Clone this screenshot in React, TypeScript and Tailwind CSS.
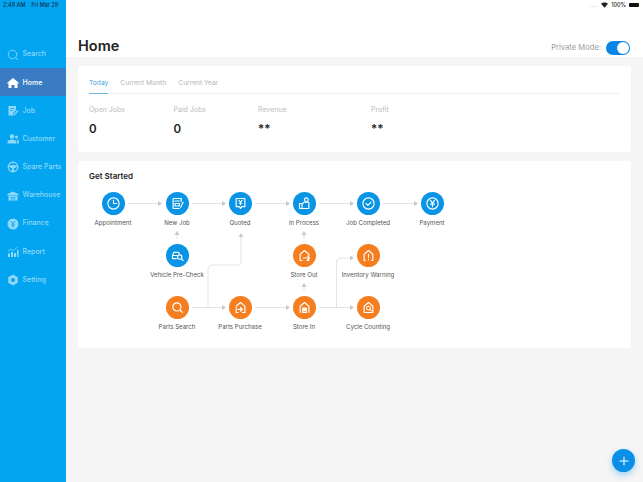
import type { ReactNode } from "react"
import { Plus } from "lucide-react"

const FONT = "font-['Inter','Liberation_Sans',sans-serif]"

const NavIcon = ({ children }: { children: ReactNode }) => (
  <svg viewBox="0 0 24 24" className="h-[12px] w-[12px]" fill="currentColor">
    {children}
  </svg>
)

const navItems = [
  { label: "Search", icon: <NavIcon><circle cx="11" cy="11" r="8.500" fill="none" stroke="currentColor" strokeWidth="1.800" /><path d="M17 17l5 5" stroke="currentColor" strokeWidth="1.800" strokeLinecap="round" /></NavIcon> },
  { label: "Home", active: true, icon: <NavIcon><path d="M12 2L0 12l1.500 1.500L3 12.300V22h6v-6h6v6h6v-9.700l1.500 1.200L24 12z" /></NavIcon> },
  { label: "Job", icon: <NavIcon><path d="M3 2h15v8l-6 7v4H3z" /><path d="M21 10l2 2-8 9h-2v-2z" /><path d="M6 7h9M6 11h6" stroke="#03a5f1" strokeWidth="1.500" /></NavIcon> },
  { label: "Customer", icon: <NavIcon><circle cx="10" cy="7" r="4.500" /><circle cx="19" cy="8" r="3" /><path d="M1 21v-3c0-3 4-5 9-5s9 2 9 5v3zM20.500 21v-4c0-1.500-.5-3-2-4 3 0 5.500 1.500 5.500 4v4z" /></NavIcon> },
  { label: "Spare Parts", icon: <NavIcon><circle cx="12" cy="12" r="9.500" fill="none" stroke="currentColor" strokeWidth="2.600" /><path d="M3 10c6-3 12-3 18 0l-5 4h-8zM10 14h4v7h-4z" /></NavIcon> },
  { label: "Warehouse", icon: <NavIcon><path d="M12 3L1 8v3h22V8z" /><path d="M3 12h18v9H3z" /><path d="M7 15h10M7 18h10" stroke="#03a5f1" strokeWidth="1.500" /></NavIcon> },
  { label: "Finance", icon: <NavIcon><circle cx="12" cy="12" r="11" /><path d="M8 6l4 6 4-6M12 12v7M8.500 14h7" stroke="#03a5f1" strokeWidth="1.800" fill="none" /></NavIcon> },
  { label: "Report", icon: <NavIcon><path d="M2 15h4v7H2zM8 12h4v10H8zM14 14h4v8h-4zM20 8h3v14h-3z" /><path d="M2 10l6-4 5 3 8-7" fill="none" stroke="currentColor" strokeWidth="1.500" /></NavIcon> },
  { label: "Setting", icon: <NavIcon><path d="M12 1l9.500 5.500v11L12 23l-9.500-5.500v-11z" /><circle cx="12" cy="12" r="4" fill="#03a5f1" /></NavIcon> },
]

const Sym = ({ children }: { children: ReactNode }) => (
  <svg viewBox="0 0 24 24" className="h-[15px] w-[15px]" fill="none" stroke="white" strokeWidth="1.800" strokeLinecap="round" strokeLinejoin="round">
    {children}
  </svg>
)

const nodes: { label: string; x: number; y: number; orange?: boolean; icon: ReactNode }[] = [
  { label: "Appointment", x: 35, y: 42, icon: <Sym><circle cx="12" cy="12" r="9" /><path d="M12 7v5h5" /></Sym> },
  { label: "New Job", x: 99, y: 42, icon: <Sym><path d="M18 9V4H5v16h10" /><path d="M8 8h7M8 12h7v4H8z" /><path d="M21 10l-4 8" /></Sym> },
  { label: "Quoted", x: 162, y: 42, icon: <Sym><path d="M5 4h14v13h-5l-2 3-2-3H5z" /><path d="M9.500 7l2.500 3 2.500-3M12 10v4M10 11.500h4" /></Sym> },
  { label: "In Process", x: 226, y: 42, icon: <Sym><circle cx="15" cy="6" r="3" /><path d="M4 12h4v8H4zM8 13l3-3h8v10H8" /></Sym> },
  { label: "Job Completed", x: 290, y: 42, icon: <Sym><circle cx="12" cy="12" r="9" /><path d="M8 12l3 3 5-5" /></Sym> },
  { label: "Payment", x: 354, y: 42, icon: <Sym><circle cx="12" cy="12" r="9" /><path d="M9 7l3 5 3-5M12 12v5M9 13h6" /></Sym> },
  { label: "Vehicle Pre-Check", x: 99, y: 94, icon: <Sym><path d="M10 17H4v-5l2-5h8l1 3M4 12h7" /><circle cx="15.500" cy="14.500" r="3.500" /><path d="M18 17l3 3" /></Sym> },
  { label: "Store Out", x: 226, y: 94, orange: true, icon: <Sym><path d="M8 20H5V10l7-6 7 6v2M19 19v1h-3" /><path d="M10 16h10M17 13l3 3-3 3" /></Sym> },
  { label: "Inventory Warning", x: 290, y: 94, orange: true, icon: <Sym><path d="M7 20H5V10l7-6 7 6v10h-2" /><path d="M12 10v5M12 18v.500" /></Sym> },
  { label: "Parts Search", x: 99, y: 146, orange: true, icon: <Sym><circle cx="11" cy="11" r="6.500" /><path d="M16 16l4 4" /></Sym> },
  { label: "Parts Purchase", x: 162, y: 146, orange: true, icon: <Sym><path d="M5 12v8h3M19 20V10l-7-6-7 6" /><path d="M8 15h7M12 12l3 3-3 3" /><path d="M19 20h-4" /></Sym> },
  { label: "Store In", x: 226, y: 146, orange: true, icon: <Sym><path d="M5 20V10l7-6 7 6v10" /><path d="M9 13h2.500v2.500H9zM12.500 13H15v2.500h-2.500zM9 17h6v3H9z" /></Sym> },
  { label: "Cycle Counting", x: 290, y: 146, orange: true, icon: <Sym><path d="M5 20V10l7-6 7 6v10z" /><circle cx="12" cy="13" r="3" /><path d="M14 15l2.500 2.500" /></Sym> },
]

// connector paths, in the card's coordinates
const lines = [
  "M50 42.500H80", "M114 42.500H144", "M177 42.500H208", "M241 42.500H272", "M305 42.500H336",
  "M99 78V74", "M226 78V74", "M226 130V126",
  "M114 146.500H144", "M177 146.500H208", "M241 146.500H272",
  "M130 146V109Q130 104 135 104H158Q163 104 163 99V76",
  "M258.500 146V102Q258.500 97 263.500 97H272",
]
const heads = [
  "M80 40L84 42.500L80 45Z", "M144 40L148 42.500L144 45Z", "M208 40L212 42.500L208 45Z", "M272 40L276 42.500L272 45Z", "M336 40L340 42.500L336 45Z",
  "M96.500 74L99 70L101.500 74Z", "M223.500 74L226 70L228.500 74Z", "M223.500 126L226 122L228.500 126Z",
  "M144 144L148 146.500L144 149Z", "M208 144L212 146.500L208 149Z", "M272 144L276 146.500L272 149Z",
  "M160.500 76L163 72L165.500 76Z", "M272 94.500L276 97L272 99.500Z",
]

const stats = [
  { label: "Open Jobs", value: "0", w: "w-[84.500px]" },
  { label: "Paid Jobs", value: "0", w: "w-[84.500px]" },
  { label: "Revenue", value: "**", w: "w-[113px]" },
  { label: "Profit", value: "**", w: "w-[100px]" },
]

const App = () => {
  return (
    <div className={`relative flex h-[482px] w-[643px] overflow-hidden bg-[#f5f5f5] ${FONT}`}>
      {/* status bar */}
      <div className="absolute inset-x-0 top-0 z-10 flex h-[10px] items-center justify-between pl-[3px] pr-[4px] text-[5.500px] font-medium">
        <div className="flex gap-[6px] text-[#0d3350]">
          <span>2:48 AM</span>
          <span>Fri Mar 29</span>
        </div>
        <div className="flex items-center gap-[3px] text-[#222]">
          <span className="tracking-[0.5px] text-[#999]">....</span>
          <svg viewBox="0 0 12 9" className="h-[6px] w-[7px]" fill="#222"><path d="M6 9L0 2.500C3.500-.8 8.500-.8 12 2.500z" /></svg>
          <span>100%</span>
          <span className="h-[4.500px] w-[10px] rounded-[1px] bg-[#111]" />
        </div>
      </div>

      <aside className="flex w-[66px] shrink-0 flex-col bg-[#03a5f1] pt-[40px]">
        {navItems.map((item) => (
          <div
            key={item.label}
            className={`flex h-[28.200px] items-center gap-[4px] pl-[6.500px] pt-[1px] text-[7px] font-medium ${item.active ? "bg-[#3a7cc4] text-white" : "text-[#8ed8fa]"}`}
          >
            <span className="flex w-[12px] justify-center">{item.icon}</span>
            <span className="whitespace-nowrap">{item.label}</span>
          </div>
        ))}
      </aside>

      <main className="flex min-w-0 flex-1 flex-col">
        <header className="flex h-[57px] items-end justify-between bg-white pl-[12px] pr-[13px]">
          <h1 className="pb-[1px] text-[14.500px] font-semibold leading-[20px] text-[#222]">Home</h1>
          <div className="flex items-center gap-[5px] pb-[2px]">
            <span className="text-[7.600px] text-[#9b9b9b]">Private Mode:</span>
            <span className="relative h-[14px] w-[24px] rounded-full bg-[#0a84e6]">
              <span className="absolute right-[1px] top-[1px] h-[12px] w-[12px] rounded-full bg-white" />
            </span>
          </div>
        </header>

        <div className="flex flex-col gap-[9px] px-[12px] pt-[9px]">
          <section className="h-[86px] rounded-[3px] bg-white px-[11px] pt-[8px]">
            <div className="flex h-[20px] gap-[12px] border-b border-[#f1f1f1] text-[6.700px] text-[#b5b5b5]">
              <span className="h-[20px] border-b-[1.500px] border-[#6bb8ea] pt-[4px] text-[#4aa5e4]">Today</span>
              <span className="pt-[4px]">Current Month</span>
              <span className="pt-[4px]">Current Year</span>
            </div>
            <div className="flex pt-[11px]">
              {stats.map((s) => (
                <div key={s.label} className={s.w}>
                  <div className="text-[7px] leading-[10px] text-[#bdbdbd]">{s.label}</div>
                  <div className={`mt-[5.500px] text-[11.500px] font-semibold leading-[16px] text-[#222] ${s.value === "**" ? "-translate-y-[0.5px]" : ""}`}>{s.value}</div>
                </div>
              ))}
            </div>
          </section>

          <section className="relative h-[187px] rounded-[3px] bg-white">
            <h2 className="pl-[11px] pt-[10px] text-[8px] font-semibold leading-[11px] text-[#222]">Get Started</h2>
            <svg viewBox="0 0 553 187" className="absolute inset-0 h-full w-full" fill="none">
              {lines.map((d) => <path key={d} d={d} stroke="#e4e4e4" strokeWidth="1" />)}
              {heads.map((d) => <path key={d} d={d} fill="#c9c9c9" />)}
            </svg>
            {nodes.map((n) => (
              <div
                key={n.label}
                className="absolute flex w-[80px] -translate-x-1/2 -translate-y-[11px] flex-col items-center"
                style={{ left: n.x, top: n.y }}
              >
                <div className={`flex h-[23px] w-[23px] items-center justify-center rounded-full ${n.orange ? "bg-[#f57e20]" : "bg-[#0a94e6]"}`}>
                  {n.icon}
                </div>
                <span className="mt-[2.500px] whitespace-nowrap text-[6.100px] leading-[9px] text-[#555]">{n.label}</span>
              </div>
            ))}
          </section>
        </div>
      </main>

      {/* floating add button */}
      <button className="absolute bottom-[10px] right-[8px] flex h-[23px] w-[23px] items-center justify-center rounded-full bg-[#0a8fe8] text-white shadow-[0_3px_6px_rgba(10,143,232,0.35)]">
        <Plus size={14} strokeWidth={1.8} />
      </button>
    </div>
  )
}

export default App
